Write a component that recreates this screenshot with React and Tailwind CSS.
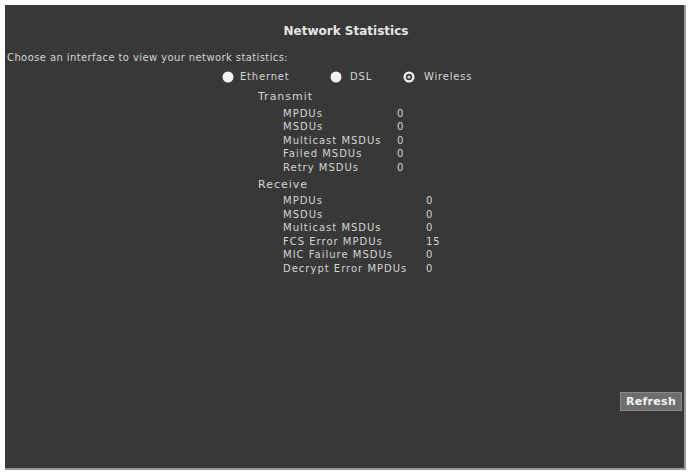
import React from "react";

const font = { fontFamily: '"DejaVu Sans", Verdana, sans-serif' };

function Radio({ checked }) {
  return (
    <svg width="12" height="12" viewBox="0 0 12 12" className="shrink-0">
      <circle cx="6" cy="6" r="5.5" fill="#f2f2f2" />
      {checked && <circle cx="6" cy="6" r="3.2" fill="#3a3a3a" />}
      {checked && <circle cx="6" cy="6" r="1.6" fill="#d8d8d8" />}
    </svg>
  );
}

const transmit = [
  ["MPDUs", "0"],
  ["MSDUs", "0"],
  ["Multicast MSDUs", "0"],
  ["Failed MSDUs", "0"],
  ["Retry MSDUs", "0"],
];

const receive = [
  ["MPDUs", "0"],
  ["MSDUs", "0"],
  ["Multicast MSDUs", "0"],
  ["FCS Error MPDUs", "15"],
  ["MIC Failure MSDUs", "0"],
  ["Decrypt Error MPDUs", "0"],
];

function StatRows({ rows, labelWidth }) {
  return (
    <div className="flex flex-col pl-[25px] tracking-[1px]">
      {rows.map(([k, v]) => (
        <div key={k} className="flex h-[13.5px] items-center">
          <span className={labelWidth}>{k}</span>
          <span>{v}</span>
        </div>
      ))}
    </div>
  );
}

export default function App() {
  return (
    <div className="w-[690px] h-[473px] bg-white pt-[5px] pl-[5px]" style={font}>
      <div className="w-[681px] h-[465px] bg-[#383838] border-r-[2px] border-b-[2px] border-[#9a9a9a] flex flex-col text-[#d4d4d4] text-[10px] leading-none">
        <div className="text-center text-[12px] font-bold text-[#e6e6e6] mt-[20px] pl-[3px]">
          Network Statistics
        </div>
        <div className="mt-[16px] pl-[2px] tracking-[0.4px]">
          Choose an interface to view your network statistics:
        </div>
        <div className="flex items-center mt-[8px] pl-[217px] tracking-[0.8px]">
          <Radio />
          <span className="ml-[6px] w-[90px]">Ethernet</span>
          <Radio />
          <span className="ml-[8px] w-[53px]">DSL</span>
          <Radio checked />
          <span className="ml-[9px]">Wireless</span>
        </div>
        <div className="flex flex-col pl-[253px]">
          <div className="mt-[6px] text-[11px] h-[14px] flex items-center tracking-[1px]">Transmit</div>
          <div className="mt-[4px]">
            <StatRows rows={transmit} labelWidth="w-[114px]" />
          </div>
          <div className="mt-[3px] text-[11px] h-[14px] flex items-center tracking-[1px]">Receive</div>
          <div className="mt-[3px]">
            <StatRows rows={receive} labelWidth="w-[143px]" />
          </div>
        </div>
        <div className="flex-1" />
        <div className="flex justify-end pr-[2px] mb-[57px]">
          <button className="w-[62px] h-[19px] bg-[#6e6e6e] border border-[#8a8a8a] text-[#f4f4f4] text-[11px] font-bold tracking-[0.3px]">
            Refresh
          </button>
        </div>
      </div>
    </div>
  );
}
